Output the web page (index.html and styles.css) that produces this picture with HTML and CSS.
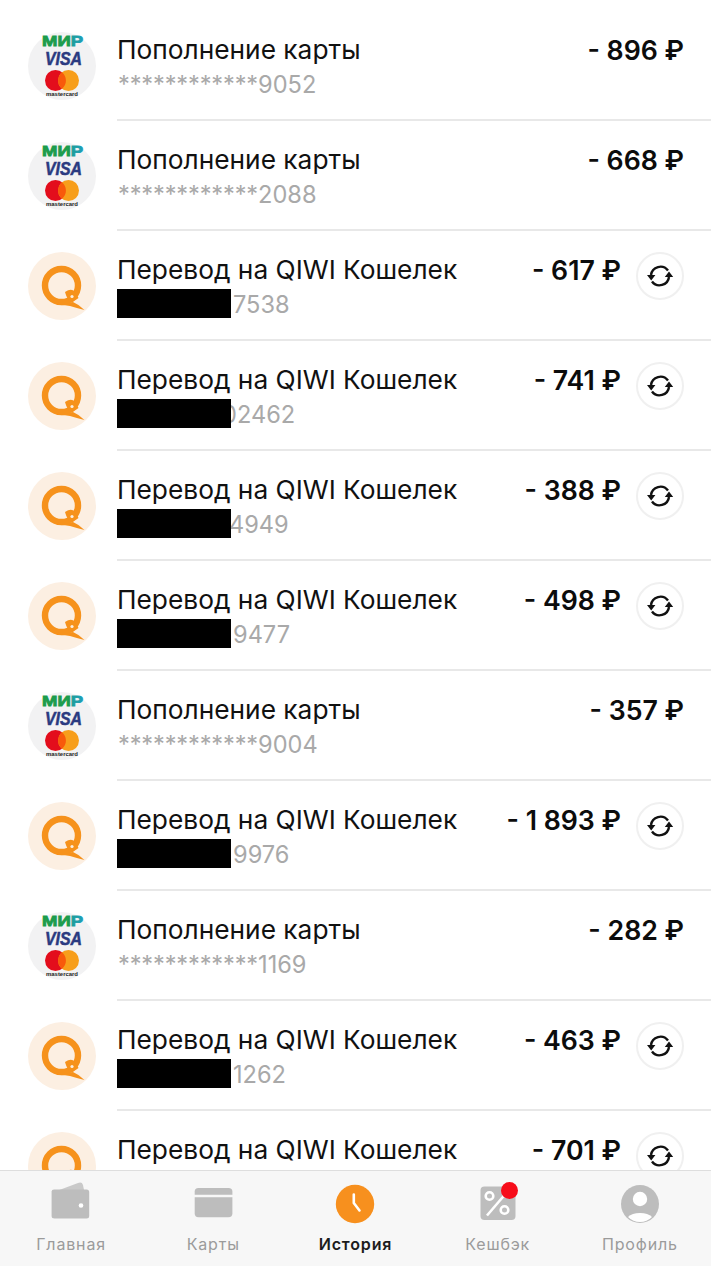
FILE: index.html
```html
<!DOCTYPE html>
<html lang="ru">
<head>
<meta charset="utf-8">
<title>История</title>
<link rel="stylesheet" href="styles.css">
</head>
<body>
<svg class="defs" width="0" height="0" aria-hidden="true">
  <defs>
    <linearGradient id="mirp" x1="0" y1="0" x2="1" y2="0">
      <stop offset="0" stop-color="#1c9c4c"/>
      <stop offset="1" stop-color="#1d9fb8"/>
    </linearGradient>
    <symbol id="logo-cards" viewBox="0 0 68 68">
      <circle cx="34" cy="34" r="34" fill="#f2f2f3"/>
      <text x="14" y="14" class="mir" textLength="41" lengthAdjust="spacingAndGlyphs">МИ<tspan fill="url(#mirp)" stroke="url(#mirp)">Р</tspan></text>
      <text x="17" y="33" class="visa" textLength="37" lengthAdjust="spacingAndGlyphs">VISA</text>
      <circle cx="27.5" cy="48.5" r="10.5" fill="#e30d1c"/>
      <circle cx="40.5" cy="48.5" r="10.5" fill="#f79e1b"/>
      <path d="M34 40.3a10.5 10.5 0 0 1 0 16.4a10.5 10.5 0 0 1 0-16.4z" fill="#f8590b"/>
      <text x="18" y="64" class="mc" textLength="32" lengthAdjust="spacingAndGlyphs">mastercard</text>
    </symbol>
    <symbol id="logo-qiwi" viewBox="0 0 68 68">
      <circle cx="34" cy="34" r="34" fill="#fcefe2"/>
      <circle cx="33.5" cy="33.5" r="16.5" fill="none" stroke="#f6921c" stroke-width="6.4"/>
      <path d="M37 40Q43 36 47 39.5L50.5 46L44 50.5Q39 48 37 40Z" fill="#f6921c"/>
      <path d="M28 50Q38 51 45 50Q51 52.5 56.5 58Q48.5 56 42 54Q35 52.5 29 53Z" fill="#f6921c"/>
      <circle cx="44" cy="44.5" r="1.6" fill="#fcefe2"/>
    </symbol>
    <symbol id="repeat" viewBox="0 0 28 28">
      <path d="M5 13A9.5 9.5 0 0 1 22 8.5M23 15A9.5 9.5 0 0 1 6 19.5" fill="none" stroke="#111" stroke-width="2.4"/>
      <path d="M1 13H9.4L5.2 18.4ZM18.8 15H27.2L23 9.6Z" fill="#111"/>
    </symbol>
  </defs>
</svg>

<div class="app">
  <main class="list">
    <article class="row">
      <svg class="logo"><use href="#logo-cards"/></svg>
      <div class="body">
        <div class="info"><div class="title">Пополнение карты</div><div class="sub"><span class="stars">************</span>9052</div></div>
        <div class="amount">- 896 ₽</div>
      </div>
    </article>
    <article class="row">
      <svg class="logo"><use href="#logo-cards"/></svg>
      <div class="body">
        <div class="info"><div class="title">Пополнение карты</div><div class="sub"><span class="stars">************</span>2088</div></div>
        <div class="amount">- 668 ₽</div>
      </div>
    </article>
    <article class="row">
      <svg class="logo"><use href="#logo-qiwi"/></svg>
      <div class="body">
        <div class="info"><div class="title">Перевод на QIWI Кошелек</div><div class="sub"><span class="mask"></span><span class="digits">7538</span></div></div>
        <div class="amount">- 617 ₽</div>
        <button class="repeat"><svg><use href="#repeat"/></svg></button>
      </div>
    </article>
    <article class="row">
      <svg class="logo"><use href="#logo-qiwi"/></svg>
      <div class="body">
        <div class="info"><div class="title">Перевод на QIWI Кошелек</div><div class="sub"><span class="mask"></span><span class="digits hidden-start">02462</span></div></div>
        <div class="amount">- 741 ₽</div>
        <button class="repeat"><svg><use href="#repeat"/></svg></button>
      </div>
    </article>
    <article class="row">
      <svg class="logo"><use href="#logo-qiwi"/></svg>
      <div class="body">
        <div class="info"><div class="title">Перевод на QIWI Кошелек</div><div class="sub"><span class="mask"></span><span class="digits tight">4949</span></div></div>
        <div class="amount">- 388 ₽</div>
        <button class="repeat"><svg><use href="#repeat"/></svg></button>
      </div>
    </article>
    <article class="row">
      <svg class="logo"><use href="#logo-qiwi"/></svg>
      <div class="body">
        <div class="info"><div class="title">Перевод на QIWI Кошелек</div><div class="sub"><span class="mask"></span><span class="digits">9477</span></div></div>
        <div class="amount">- 498 ₽</div>
        <button class="repeat"><svg><use href="#repeat"/></svg></button>
      </div>
    </article>
    <article class="row">
      <svg class="logo"><use href="#logo-cards"/></svg>
      <div class="body">
        <div class="info"><div class="title">Пополнение карты</div><div class="sub"><span class="stars">************</span>9004</div></div>
        <div class="amount">- 357 ₽</div>
      </div>
    </article>
    <article class="row">
      <svg class="logo"><use href="#logo-qiwi"/></svg>
      <div class="body">
        <div class="info"><div class="title">Перевод на QIWI Кошелек</div><div class="sub"><span class="mask"></span><span class="digits">9976</span></div></div>
        <div class="amount">- 1 893 ₽</div>
        <button class="repeat"><svg><use href="#repeat"/></svg></button>
      </div>
    </article>
    <article class="row">
      <svg class="logo"><use href="#logo-cards"/></svg>
      <div class="body">
        <div class="info"><div class="title">Пополнение карты</div><div class="sub"><span class="stars">************</span>1169</div></div>
        <div class="amount">- 282 ₽</div>
      </div>
    </article>
    <article class="row">
      <svg class="logo"><use href="#logo-qiwi"/></svg>
      <div class="body">
        <div class="info"><div class="title">Перевод на QIWI Кошелек</div><div class="sub"><span class="mask"></span><span class="digits">1262</span></div></div>
        <div class="amount">- 463 ₽</div>
        <button class="repeat"><svg><use href="#repeat"/></svg></button>
      </div>
    </article>
    <article class="row">
      <svg class="logo"><use href="#logo-qiwi"/></svg>
      <div class="body">
        <div class="info"><div class="title">Перевод на QIWI Кошелек</div></div>
        <div class="amount">- 701 ₽</div>
        <button class="repeat"><svg><use href="#repeat"/></svg></button>
      </div>
    </article>
  </main>

  <nav class="tabbar">
    <a class="tab">
      <svg class="tab-icon" viewBox="0 0 48 44">
        <path d="M7 12L31 3Q35 1.5 36 5L37 10Z" fill="#c9c9c9"/>
        <path d="M4.6 11.5Q4.6 9.5 7 9.5H39.5Q42.2 9.5 42.2 12V36Q42.2 38.5 39.5 38.5H7.5Q4.6 38.5 4.6 36Z" fill="#bdbdbd"/>
        <circle cx="34" cy="25.5" r="2.3" fill="#fff"/>
      </svg>
      <span class="tab-label">Главная</span>
    </a>
    <a class="tab">
      <svg class="tab-icon" viewBox="0 0 48 44">
        <path d="M5.7 11.5Q5.7 8 9.5 8H39.5Q43.4 8 43.4 11.5V14.7H5.7Z" fill="#bdbdbd"/>
        <path d="M5.7 17.3H43.4V33.5Q43.4 37.2 39.5 37.2H9.5Q5.7 37.2 5.7 33.5Z" fill="#bdbdbd"/>
      </svg>
      <span class="tab-label">Карты</span>
    </a>
    <a class="tab active">
      <svg class="tab-icon" viewBox="0 0 48 44">
        <circle cx="24" cy="24" r="19.2" fill="#f7901e"/>
        <path d="M22.8 14.5V23L28.5 30.5" fill="none" stroke="#fff" stroke-width="2.6" stroke-linecap="round" stroke-linejoin="round"/>
      </svg>
      <span class="tab-label">История</span>
    </a>
    <a class="tab">
      <span class="tab-badge-wrap">
        <svg class="tab-icon" viewBox="0 0 48 44">
          <rect x="6.5" y="6.5" width="35" height="33.5" rx="4" fill="#bdbdbd"/>
          <circle cx="15.5" cy="16" r="3.8" fill="none" stroke="#fff" stroke-width="2.6"/>
          <circle cx="30.5" cy="30" r="3.8" fill="none" stroke="#fff" stroke-width="2.6"/>
          <path d="M13 35.5L34 11" stroke="#fff" stroke-width="2.6"/>
        </svg>
        <span class="badge"></span>
      </span>
      <span class="tab-label">Кешбэк</span>
    </a>
    <a class="tab">
      <svg class="tab-icon" viewBox="0 0 48 44">
        <circle cx="24" cy="24" r="19" fill="#bdbdbd"/>
        <circle cx="24" cy="19" r="7.2" fill="#fff"/>
        <path d="M12 37Q16 33 24 33Q32 33 36 37Q31 42 24 42Q17 42 12 37Z" fill="#fff"/>
      </svg>
      <span class="tab-label">Профиль</span>
    </a>
  </nav>
</div>
</body>
</html>
```

FILE: styles.css
```css
* {
  box-sizing: border-box;
}

html,
body {
  margin: 0;
  height: 100%;
  background: #fff;
}

.defs {
  display: block;
  height: 0;
}

.app {
  height: 1266px;
  display: flex;
  flex-direction: column;
  overflow: hidden;
  font-family: Inter, "Noto Sans", "Liberation Sans", sans-serif;
}

.list {
  flex: 1;
  min-height: 0;
  overflow: hidden;
  padding-top: 11px;
}

.row {
  height: 110px;
  display: flex;
  align-items: center;
  padding-left: 28px;
}

.logo {
  width: 68px;
  height: 68px;
  flex: none;
  margin-right: 21px;
}

.mir {
  font: 900 15.5px "Liberation Sans", sans-serif;
  fill: #1c9c4c;
  stroke: #1c9c4c;
  stroke-width: 0.9px;
}

.visa {
  font: italic 700 17.5px "Liberation Sans", sans-serif;
  fill: #2a3a80;
  stroke: #2a3a80;
  stroke-width: 0.5px;
}

.mc {
  font: 700 6px "Liberation Sans", sans-serif;
  fill: #222;
}

.body {
  flex: 1;
  align-self: stretch;
  display: flex;
  align-items: flex-start;
  padding: 21px 27px 0 0;
  border-bottom: 2px solid #e8e8e8;
}

.info {
  flex: 1;
  min-width: 0;
}

.title {
  font-size: 26.3px;
  line-height: 36px;
  color: #111;
  white-space: nowrap;
}

.sub {
  display: flex;
  align-items: center;
  height: 30px;
  margin-top: 1px;
  font-size: 23.6px;
  color: #a9a9a9;
}

.stars {
  letter-spacing: -0.15px;
  margin-left: 1px;
}

.mask {
  width: 114px;
  height: 29px;
  flex: none;
  align-self: flex-start;
  background: #000;
  position: relative;
  z-index: 1;
}

.digits {
  margin-left: 2px;
}

.digits.hidden-start {
  margin-left: -9px;
}

.digits.tight {
  margin-left: -2px;
}

.amount {
  font-size: 26.7px;
  line-height: 36px;
  font-weight: 600;
  color: #0c0c0c;
  white-space: nowrap;
}

.repeat {
  width: 48px;
  height: 48px;
  flex: none;
  margin: 0 0 0 15px;
  padding: 0;
  border: 2px solid #f0f0f0;
  border-radius: 50%;
  background: #fff;
  display: flex;
  align-items: center;
  justify-content: center;
}

.repeat svg {
  width: 28px;
  height: 28px;
}

.tabbar {
  flex: none;
  height: 96px;
  display: grid;
  grid-template-columns: repeat(5, 1fr);
  background: #f7f7f7;
  border-top: 1.5px solid #dedede;
  position: relative;
}

.tab {
  display: flex;
  flex-direction: column;
  align-items: center;
  padding-top: 9px;
  color: #9b9b9b;
}

.tab-icon {
  display: block;
  width: 48px;
  height: 44px;
}

.tab-badge-wrap {
  position: relative;
  display: block;
  height: 44px;
}

.badge {
  position: absolute;
  left: 27px;
  top: 2px;
  width: 17px;
  height: 17px;
  border-radius: 50%;
  background: #f70d1a;
}

.tab-label {
  margin-top: 10px;
  font-size: 16px;
  line-height: 20px;
  font-weight: 400;
  letter-spacing: 0.85px;
  white-space: nowrap;
}

.tab.active {
  color: #1c1c1c;
}

.tab.active .tab-label {
  font-weight: 600;
}
```
